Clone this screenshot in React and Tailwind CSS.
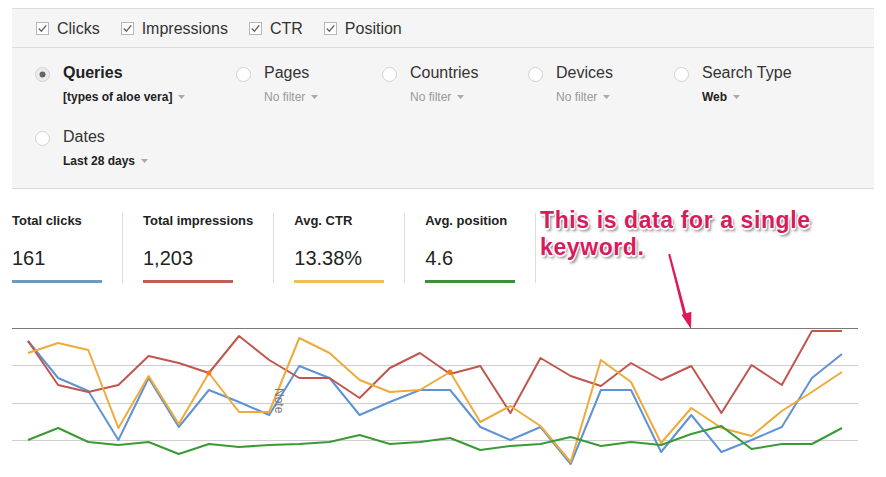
import React from "react";

const RED = [342, 386, 393, 386, 357, 364, 374, 337, 361, 379, 379, 399, 369, 354, 375, 367, 414, 359, 377, 387, 364, 381, 367, 414, 366, 386, 332, 332];
const BLUE = [342, 379, 392, 441, 379, 428, 391, 403, 416, 367, 379, 416, 403, 391, 391, 428, 441, 428, 465, 391, 391, 453, 416, 453, 441, 428, 379, 355];
const ORANGE = [354, 344, 351, 429, 377, 425, 374, 413, 413, 339, 354, 381, 393, 391, 373, 423, 407, 427, 463, 361, 383, 444, 409, 429, 437, 412, 393, 373];
const GREEN = [441, 429, 443, 446, 443, 455, 445, 448, 446, 445, 443, 436, 445, 443, 439, 451, 447, 445, 438, 447, 443, 446, 435, 427, 450, 445, 445, 429];

const toPoints = (arr) =>
  arr.map((y, i) => `${(28 + i * 30.15).toFixed(1)},${y - 320}`).join(" ");

const Check = () => (
  <svg width="13" height="13" viewBox="0 0 13 13">
    <rect x="0.5" y="0.5" width="12" height="12" fill="#fdfdfd" stroke="#b8b8b8" />
    <path d="M2.8 6.6 L5.4 9.2 L10.2 3.4" fill="none" stroke="#666" strokeWidth="1.4" />
  </svg>
);

const Radio = ({ on }) => (
  <svg width="15" height="15" viewBox="0 0 15 15" className="mt-[4px] mr-[13px] shrink-0">
    <circle cx="7.5" cy="7.5" r="7" fill={on ? "#ececec" : "#fff"} stroke="#d0d0d0" />
    {on && <circle cx="7.5" cy="7.5" r="3" fill="#666" />}
  </svg>
);

const Caret = () => (
  <svg width="7" height="4" viewBox="0 0 7 4" className="ml-[6px] inline-block">
    <path d="M0 0 L7 0 L3.5 4 Z" fill="#aaa" />
  </svg>
);

const Dim = ({ title, sub, on, bold, w }) => (
  <div className={`flex ${w}`}>
    <Radio on={on} />
    <div>
      <div className={`text-[16px] leading-[20px] ${on ? "font-bold text-[#222]" : "text-[#333]"}`}>{title}</div>
      <div className={`mt-[6px] flex items-center text-[12px] leading-[16px] ${bold ? "font-bold text-[#222]" : "text-[#999]"}`}>
        {sub}
        <Caret />
      </div>
    </div>
  </div>
);

const Stat = ({ label, value, color }) => (
  <div className="flex flex-col pr-[20px] mr-[20px] border-r border-[#ddd]">
    <div className="text-[13px] leading-[16px] font-bold text-[#222] whitespace-nowrap">{label}</div>
    <div className="mt-[17px] text-[20px] leading-[24px] text-[#222]">{value}</div>
    <div className={`mt-[10px] h-[3px] w-[90px] ${color}`} />
  </div>
);

export default function App() {
  return (
    <div className="relative w-[886px] h-[477px] overflow-hidden bg-white font-['Liberation_Sans',Arial,sans-serif]">
      <div className="pt-2 px-3">
        <div className="bg-[#f5f5f5] border-t border-b border-[#dcdcdc]">
          <div className="h-[39px] flex items-center pt-[1px] pl-[24px] gap-[21px] border-b border-[#dcdcdc] text-[16px] text-[#333]">
            {["Clicks", "Impressions", "CTR", "Position"].map((t) => (
              <div key={t} className="flex items-center gap-[8px]">
                <Check />
                <span>{t}</span>
              </div>
            ))}
          </div>
          <div className="pl-[23px] pt-[15px] pb-[19px]">
            <div className="flex">
              <Dim title="Queries" sub="[types of aloe vera]" on bold w="w-[201px]" />
              <Dim title="Pages" sub="No filter" w="w-[146px]" />
              <Dim title="Countries" sub="No filter" w="w-[146px]" />
              <Dim title="Devices" sub="No filter" w="w-[146px]" />
              <Dim title="Search Type" sub="Web" bold w="w-[146px]" />
            </div>
            <div className="flex mt-[22px]">
              <Dim title="Dates" sub="Last 28 days" bold w="w-[201px]" />
            </div>
          </div>
        </div>
      </div>

      <div className="flex px-3 mt-[24px]">
        <Stat label="Total clicks" value="161" color="bg-[#6d9ac0]" />
        <Stat label="Total impressions" value="1,203" color="bg-[#bf5f52]" />
        <Stat label="Avg. CTR" value="13.38%" color="bg-[#efbe5c]" />
        <Stat label="Avg. position" value="4.6" color="bg-[#3d8f3a]" />
      </div>

      <svg width="886" height="157" viewBox="0 0 886 157" className="block mt-[36px]">
        <line x1="12" y1="9.5" x2="858" y2="9.5" stroke="#7a7a7a" strokeWidth="1" />
        <line x1="12" y1="46.5" x2="858" y2="46.5" stroke="#cfcfcf" strokeWidth="1" />
        <line x1="12" y1="84.5" x2="858" y2="84.5" stroke="#cfcfcf" strokeWidth="1" />
        <line x1="12" y1="121.5" x2="858" y2="121.5" stroke="#cfcfcf" strokeWidth="1" />
        <polyline points={toPoints(BLUE)} fill="none" stroke="#5f93d3" strokeWidth="2" strokeLinejoin="round" />
        <polyline points={toPoints(RED)} fill="none" stroke="#c1564d" strokeWidth="2" strokeLinejoin="round" />
        <polyline points={toPoints(ORANGE)} fill="none" stroke="#eeaa3a" strokeWidth="2" strokeLinejoin="round" />
        <polyline points={toPoints(GREEN)} fill="none" stroke="#3b9936" strokeWidth="2" strokeLinejoin="round" />
        <circle cx="208.9" cy="54" r="2.5" fill="#f47b20" />
        <circle cx="450" cy="53" r="2.5" fill="#f47b20" />
        <text
          transform="translate(275 69) rotate(90)"
          fontSize="12"
          fill="#777"
          fontFamily="Liberation Sans, Arial, sans-serif"
        >
          Note
        </text>
      </svg>

      <div className="absolute left-[540px] top-[207px] text-[23px] leading-[27px] font-bold tracking-[0.6px] text-[#d81b5e] [text-shadow:-1px_-1px_0_#fff,1px_-1px_0_#fff,-1px_1px_0_#fff,1px_1px_0_#fff,0_2px_0_#fff,2px_3px_3px_rgba(0,0,0,0.55)]">
        <div>This is data for a single</div>
        <div>keyword.</div>
      </div>

      <svg width="886" height="477" viewBox="0 0 886 477" className="absolute left-0 top-0 pointer-events-none">
        <polygon points="668.2,254.2 670.2,253.8 686.4,314 683.4,314.8" fill="#e0195f" />
        <polygon points="691,329 691.4,311.8 681.4,314.8" fill="#e0195f" />
      </svg>
    </div>
  );
}
